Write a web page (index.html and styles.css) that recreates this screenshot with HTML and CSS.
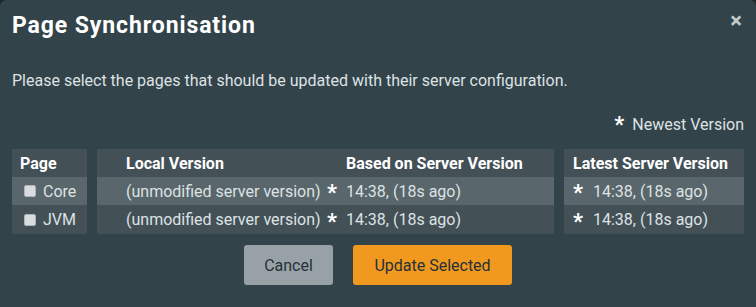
FILE: index.html
```html
<!DOCTYPE html>
<html lang="en">
<head>
    <meta charset="UTF-8">
    <meta name="viewport" content="width=device-width, initial-scale=1.0">
    <title>Page Synchronisation</title>
    <link rel="stylesheet" href="styles.css">
</head>
<body>
    <div class="dialog">
        <div class="dialog-header">
            <h2 class="dialog-title">Page Synchronisation</h2>
            <span class="close">&times;</span>
        </div>

        <p class="intro">Please select the pages that should be updated with their server configuration.</p>

        <div class="legend"><span class="star">*</span> Newest Version</div>

        <div class="sync-tables">
            <div class="grp grp-page">
                <div class="cell head">Page</div>
                <div class="cell row-a"><input type="checkbox" class="chk"> Core</div>
                <div class="cell row-b"><input type="checkbox" class="chk"> JVM</div>
            </div>

            <div class="grp grp-local">
                <div class="cell head"></div>
                <div class="cell head">Local Version</div>
                <div class="cell head"></div>
                <div class="cell head">Based on Server Version</div>

                <div class="cell row-a"></div>
                <div class="cell row-a">(unmodified server version)</div>
                <div class="cell row-a"><span class="star">*</span></div>
                <div class="cell row-a">14:38, (18s ago)</div>

                <div class="cell row-b"></div>
                <div class="cell row-b">(unmodified server version)</div>
                <div class="cell row-b"><span class="star">*</span></div>
                <div class="cell row-b">14:38, (18s ago)</div>
            </div>

            <div class="grp grp-latest">
                <div class="cell head span-2">Latest Server Version</div>
                <div class="cell row-a"><span class="star">*</span></div>
                <div class="cell row-a">14:38, (18s ago)</div>
                <div class="cell row-b"><span class="star">*</span></div>
                <div class="cell row-b">14:38, (18s ago)</div>
            </div>
        </div>

        <div class="actions">
            <button class="btn btn-cancel">Cancel</button>
            <button class="btn btn-primary">Update Selected</button>
        </div>
    </div>
</body>
</html>
```

FILE: styles.css
```css
html, body {
    margin: 0;
    height: 100%;
    background-color: #1f2629;
}
body {
    font-family: Roboto, 'Noto Sans', Arial, sans-serif;
    font-size: 16px;
    color: #dde2e4;
}
.dialog {
    height: 100%;
    box-sizing: border-box;
    background-color: #33434a;
    border-radius: 6px 6px 0 0;
    padding: 12px 12px 0 12px;
}
.dialog-header {
    display: flex;
    justify-content: space-between;
    align-items: flex-start;
}
.dialog-title {
    margin: 0;
    font-size: 23px;
    line-height: 28px;
    font-weight: bold;
    letter-spacing: 0.9px;
    color: #ffffff;
}
.close {
    font-size: 22px;
    line-height: 18px;
    font-weight: bold;
    color: #c5cbce;
    margin-top: 0;
    margin-right: 2px;
}
.intro {
    margin: 31px 0 0 0;
    line-height: 20px;
}
.legend {
    text-align: right;
    margin-top: 21px;
    line-height: 20px;
}
.star {
    font-weight: bold;
    font-size: 22px;
    line-height: 1;
    color: #ffffff;
    position: relative;
    top: 2px;
}
.legend .star {
    margin-right: 4px;
}
.sync-tables {
    display: flex;
    gap: 10px;
    margin-top: 14px;
}
.grp {
    display: grid;
    grid-template-rows: 28px 28px 29px;
}
.grp-page {
    width: 75px;
    grid-template-columns: 1fr;
}
.grp-local {
    width: 457px;
    grid-template-columns: 29px 201px 19px 1fr;
}
.grp-latest {
    flex: 1;
    grid-template-columns: 29px 1fr;
}
.cell {
    display: flex;
    align-items: center;
    white-space: nowrap;
    background-color: #435157;
}
.cell.head {
    font-weight: bold;
    color: #ffffff;
}
.cell.row-a {
    background-color: #59666b;
}
.grp-page .cell.head {
    padding-left: 8px;
}
.grp-page .cell.row-a,
.grp-page .cell.row-b {
    padding-left: 12px;
    gap: 7px;
}
.grp-latest .cell:nth-child(2n) {
    padding-left: 9px;
}
.span-2 {
    grid-column: span 2;
    padding-left: 9px;
}
.chk {
    appearance: none;
    margin: 0;
    width: 12px;
    height: 12px;
    box-sizing: border-box;
    background-color: #dadddf;
    border: 1px solid #aeb4b7;
    border-radius: 2px;
}
.actions {
    display: flex;
    justify-content: center;
    gap: 20px;
    margin-top: 11px;
}
.btn {
    font-family: inherit;
    font-size: 16px;
    height: 40px;
    border: none;
    border-radius: 3px;
    color: #25313a;
    padding: 0;
}
.btn-cancel {
    background-color: #98a2a6;
    width: 89px;
}
.btn-primary {
    background-color: #f0991e;
    width: 159px;
}
```
